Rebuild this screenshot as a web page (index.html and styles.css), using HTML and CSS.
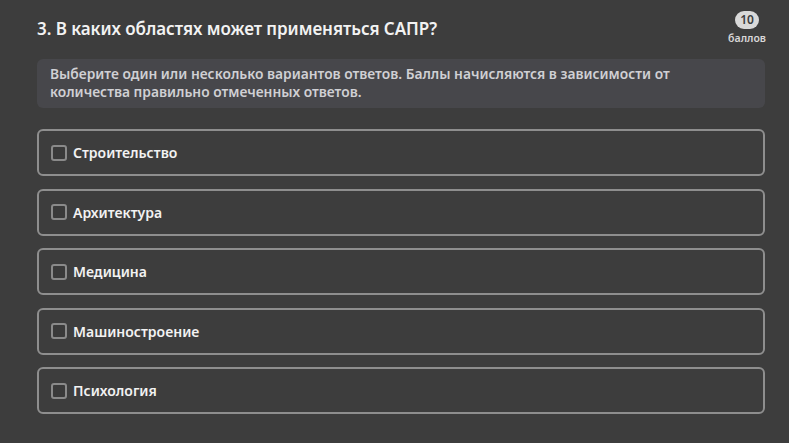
FILE: index.html
```html
<!DOCTYPE html>
<html lang="ru">
<head>
  <meta charset="UTF-8" />
  <title>Тест | Вопрос 3</title>
  <meta name="viewport" content="width=device-width, initial-scale=1.0" />
  <link rel="stylesheet" href="styles.css">
</head>
<body>

  <div class="question">
    <div class="question-head">
      <h2>3. В каких областях может применяться САПР?</h2>
      <div class="points">
        <span class="points-num">10</span>
        <span class="points-label">баллов</span>
      </div>
    </div>

    <div class="hint">
      Выберите один или несколько вариантов ответов. Баллы начисляются в зависимости от
      количества правильно отмеченных ответов.
    </div>

    <!-- Answer options -->
    <div class="options">
      <label class="option"><input type="checkbox" /><span>Строительство</span></label>
      <label class="option"><input type="checkbox" /><span>Архитектура</span></label>
      <label class="option"><input type="checkbox" /><span>Медицина</span></label>
      <label class="option"><input type="checkbox" /><span>Машиностроение</span></label>
      <label class="option"><input type="checkbox" /><span>Психология</span></label>
    </div>
  </div>

</body>
</html>
```

FILE: styles.css
```css
body {
  font-family: 'Noto Sans', sans-serif;
  background: #3d3d3d;
  color: #f2f2f2;
  margin: 0;
}

.question {
  padding: 8px 24px 30px 37px;
}

.question-head {
  display: flex;
  justify-content: space-between;
  align-items: flex-start;
}

h2 {
  font-size: 17px;
  font-weight: 600;
  margin: 9px 0 0;
  letter-spacing: -0.05px;
}

.points {
  display: flex;
  flex-direction: column;
  align-items: center;
  margin-top: 3px;
  margin-right: -1px;
}

.points-num {
  background: #d9d9d9;
  color: #3d3d3d;
  font-size: 12px;
  font-weight: 600;
  border-radius: 10px;
  padding: 0 5px;
  line-height: 18px;
  min-width: 14px;
  text-align: center;
}

.points-label {
  font-size: 10.5px;
  font-weight: 600;
  color: #d8d8d8;
  margin-top: 2px;
}

.hint {
  background: #47474b;
  color: #d0d0d4;
  font-size: 13.8px;
  font-weight: 600;
  line-height: 18px;
  padding: 6px 70px 7px 13px;
  border-radius: 6px;
  margin-top: 14px;
}

.options {
  display: flex;
  flex-direction: column;
  gap: 12.5px;
  margin-top: 21px;
}

.option {
  display: flex;
  align-items: center;
  gap: 6px;
  height: 43px;
  padding: 0 12px;
  border: 2px solid #8e8e8e;
  border-radius: 6px;
  font-size: 14px;
  font-weight: 600;
  cursor: pointer;
}

.option input {
  appearance: none;
  width: 16px;
  height: 16px;
  margin: 0;
  border: 2px solid #8a8a8a;
  border-radius: 3px;
  background: #3a3a3a;
}
```
